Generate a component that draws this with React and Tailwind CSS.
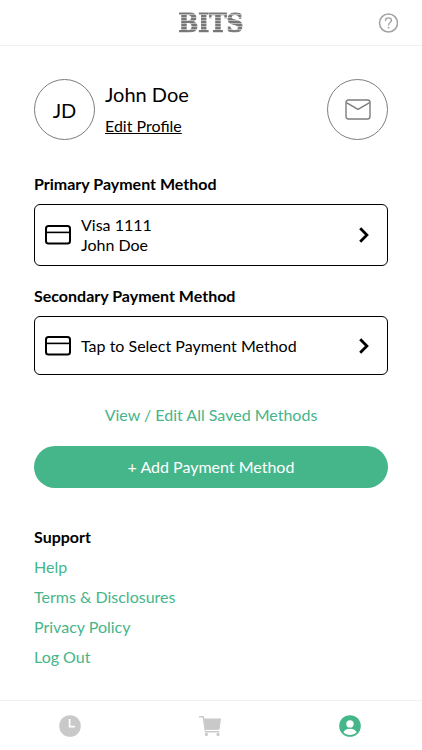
import React from "react";
import clsx from "clsx";

const PAYMENT_METHODS = [
  { id: "primary", title: "Primary Payment Method", lines: ["Visa 1111", "John Doe"] },
  { id: "secondary", title: "Secondary Payment Method", lines: ["Tap to Select Payment Method"] },
];

const SUPPORT_LINKS = ["Help", "Terms & Disclosures", "Privacy Policy", "Log Out"];

const CardIcon = () => (
  <svg width="26" height="20" viewBox="0 0 26 20" fill="none" stroke="currentColor" strokeWidth="2" aria-hidden="true">
    <rect x="1" y="1" width="24" height="17.600" rx="2.5" />
    <path d="M1 7.400h24" strokeWidth="1.6" />
  </svg>
);

const ChevronIcon = () => (
  <svg width="10" height="16" viewBox="0 0 10 16" fill="none" stroke="currentColor" strokeWidth="2.8" aria-hidden="true">
    <path d="M1.2 1.2 7.9 8 1.2 14.8" />
  </svg>
);

const MailIcon = () => (
  <svg width="26" height="21" viewBox="0 0 26 21" fill="none" stroke="#7d7d7d" strokeWidth="1.4" aria-hidden="true">
    <rect x="1" y="1" width="24" height="19" rx="2.4" />
    <path d="M1.4 3.6 13 10.4 24.6 3.6" strokeLinejoin="round" />
  </svg>
);

const HelpIcon = () => (
  <svg width="20" height="20" viewBox="0 0 20 20" fill="none" stroke="#a2a2a2" aria-hidden="true">
    <circle cx="10.500" cy="10" r="9" strokeWidth="1.5" />
    <path d="M7.500 7.400C7.500 5.500 8.800 4.800 10.500 4.800s3 .9 3 2.500c0 2.300-2.900 2.200-2.900 4.700" strokeWidth="1.3" strokeLinecap="round" />
    <circle cx="10.600" cy="14.700" r="0.9" fill="#a2a2a2" stroke="none" />
  </svg>
);

const ClockIcon = () => (
  <svg width="22" height="22" viewBox="0 0 22 22" aria-hidden="true">
    <circle cx="11" cy="11" r="10.8" fill="currentColor" />
    <path d="M10.6 4v7.700h5.300" fill="none" stroke="#fff" strokeWidth="1.7" />
  </svg>
);

const CartIcon = () => (
  <svg width="22" height="22" viewBox="0 0 22 22" fill="currentColor" aria-hidden="true">
    <path d="M5 3.6h17l-1.4 10.2a1.3 1.3 0 0 1-1.3 1.1H6.6z" />
    <path d="M0 1.8h4.3l2.3 15h13.6" fill="none" stroke="currentColor" strokeWidth="1.5" />
    <path d="M6.5 15.4h13.8" stroke="#fff" strokeWidth="1" />
    <circle cx="7.4" cy="19.4" r="1.6" />
    <circle cx="19" cy="19.4" r="1.6" />
  </svg>
);

const AccountIcon = () => (
  <svg width="22" height="22" viewBox="0 0 22 22" aria-hidden="true">
    <circle cx="11" cy="11" r="10.8" fill="currentColor" />
    <circle cx="11" cy="8.9" r="3.7" fill="#fff" />
    <path d="M4.4 17.3c1-2.4 3.600-3.500 6.600-3.500s5.600 1.100 6.600 3.500c-1.700 1.800-4 2.700-6.600 2.700s-4.900-.9-6.600-2.700z" fill="#fff" />
  </svg>
);

const TABS = [
  { id: "history", label: "History", Icon: ClockIcon },
  { id: "cart", label: "Cart", Icon: CartIcon },
  { id: "account", label: "Account", Icon: AccountIcon },
];

function PaymentMethod({ title, lines }) {
  return (
    <section className="mt-[18px]">
      <h2 className="mb-2 font-bold">{title}</h2>
      <button
        type="button"
        className="flex min-h-[59px] w-full items-center rounded-md border border-black px-[10px] py-[10px] text-left leading-5"
      >
        <CardIcon />
        <span className="ml-[10px] flex-1">
          {lines.map((line) => (
            <span key={line} className="block">{line}</span>
          ))}
        </span>
        <span className="mr-2">
          <ChevronIcon />
        </span>
      </button>
    </section>
  );
}

function App() {
  return (
    <div className="flex min-h-screen flex-col bg-white font-['Lato',sans-serif] text-base leading-6 text-black">
      <header className="grid h-[46px] grid-cols-[1fr_auto_1fr] items-center border-b border-[#f0f0f0] px-6">
        {/* Striped logo */}
        <h1 className="col-start-2 bg-[repeating-linear-gradient(to_bottom,#777_0px,#777_2px,#bbb_2px,#bbb_3px)] bg-clip-text font-['DejaVu_Serif_Condensed','DejaVu_Serif',serif] text-[26px] leading-7 font-bold text-transparent [-webkit-text-stroke:1px_transparent]">
          BITS
        </h1>
        <button type="button" aria-label="Help" className="justify-self-end">
          <HelpIcon />
        </button>
      </header>

      <main className="flex-1 px-[34px] pt-[33px] pb-7">
        {/* Profile */}
        <div className="mb-8 flex items-center gap-[10px]">
          <div className="flex size-[61px] items-center justify-center rounded-full border border-[#7d7d7d] text-xl">
            JD
          </div>
          <div className="flex flex-1 flex-col gap-2">
            <p className="text-xl leading-6">John Doe</p>
            <a href="#profile" className="self-start underline">Edit Profile</a>
          </div>
          <button
            type="button"
            aria-label="Messages"
            className="flex size-[61px] items-center justify-center rounded-full border border-[#7d7d7d]"
          >
            <MailIcon />
          </button>
        </div>

        {/* Payment methods */}
        {PAYMENT_METHODS.map((method) => (
          <PaymentMethod key={method.id} title={method.title} lines={method.lines} />
        ))}

        <a href="#methods" className="mt-7 block text-center text-[#45b58a]">
          View / Edit All Saved Methods
        </a>
        <button type="button" className="mt-[19px] h-[42px] w-full rounded-full bg-[#45b58a] text-white">
          + Add Payment Method
        </button>

        {/* Support */}
        <h2 className="mt-[37px] font-bold">Support</h2>
        <ul className="mt-[3px] leading-[30px] text-[#45b58a]">
          {SUPPORT_LINKS.map((label) => (
            <li key={label}>
              <a href="#support">{label}</a>
            </li>
          ))}
        </ul>
      </main>

      <nav className="grid h-[50px] grid-cols-3 place-items-center border-t border-[#f0f0f0] pr-0.5">
        {TABS.map(({ id, label, Icon }) => (
          <button
            key={id}
            type="button"
            aria-label={label}
            className={clsx(id === "account" ? "text-[#45b58a]" : "text-[#c9c9c9]")}
          >
            <Icon />
          </button>
        ))}
      </nav>
    </div>
  );
}

export default App;
